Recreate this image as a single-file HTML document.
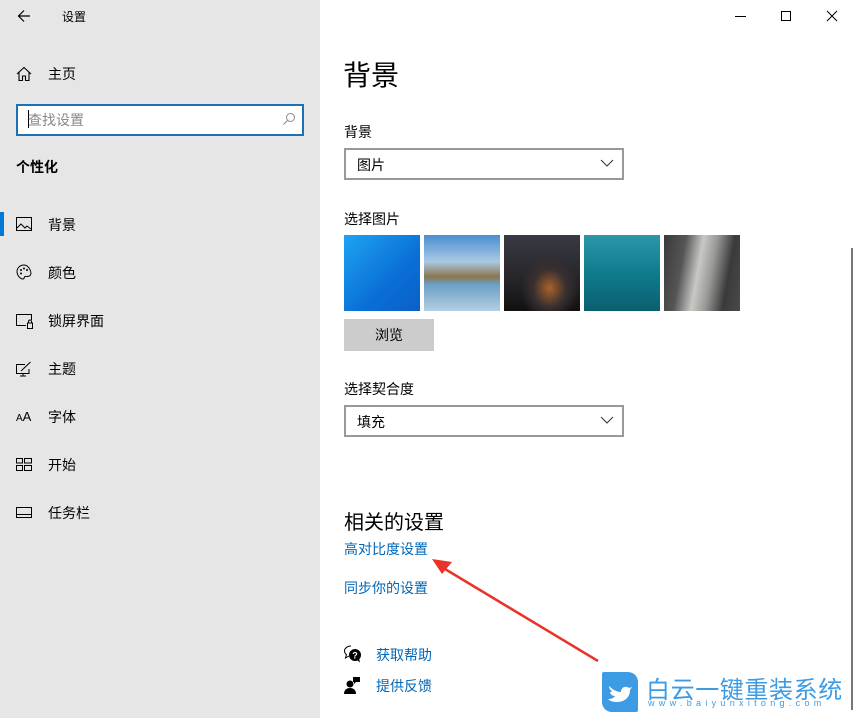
<!DOCTYPE html>
<html><head><meta charset="utf-8"><style>
*{margin:0;padding:0;box-sizing:border-box}
body{width:855px;height:718px;overflow:hidden;position:relative;background:#fff;font-family:"Liberation Sans","Noto Sans CJK SC",sans-serif;color:#000}
.a{position:absolute;white-space:nowrap}
#side{position:absolute;left:0;top:0;width:320px;height:718px;background:#e6e6e6}
.t{font-size:14px}
.ic{position:absolute;left:16px}
.dd{position:absolute;left:344px;width:280px;height:32px;border:2px solid #999;background:#fff;font-size:14px;padding:5px 11px}
.dd svg{position:absolute;right:8px;top:9px}
.img{position:absolute;top:235px;width:76px;height:76px}
.lnk{color:#0067b8;font-size:14px}
</style></head><body>
<div id="side">
<svg class="a" style="left:17px;top:9px" width="14" height="14" viewBox="0 0 14 14"><path d="M13 7H1.5M7 1.5L1.5 7L7 12.5" stroke="#000" fill="none" stroke-width="1.2"/></svg>
<div class="a" style="left:62px;top:8px;font-size:12px">设置</div>
<svg class="ic" style="top:66px" width="16" height="16" viewBox="0 0 16 16"><path d="M1 8L8 1.5L15 8M3 6.5V14.5H6.5V10H9.5V14.5H13V6.5" stroke="#000" fill="none" stroke-width="1.1"/></svg>
<div class="a t" style="left:48px;top:64px">主页</div>
<div class="a" style="left:16px;top:104px;width:288px;height:32px;border:2px solid #1e6fb7;background:#fff"></div>
<div class="a" style="left:28px;top:110px;width:1px;height:18px;background:#000"></div>
<div class="a t" style="left:28px;top:110px;color:#888">查找设置</div>
<svg class="a" style="left:282px;top:112px" width="14" height="14" viewBox="0 0 14 14"><circle cx="8.5" cy="5.5" r="4" stroke="#888" fill="none"/><path d="M5.5 8.5L1.5 12.5" stroke="#888"/></svg>
<div class="a t" style="left:16px;top:157px;font-weight:bold">个性化</div>
<div class="a" style="left:0;top:212px;width:4px;height:24px;background:#0078d7"></div>
<svg class="ic" style="top:217px" width="16" height="14" viewBox="0 0 16 14"><rect x=".5" y=".5" width="15" height="13" stroke="#000" fill="none"/><path d="M1 11L5 7L9 11L11 9L15 12" stroke="#000" fill="none"/></svg>
<div class="a t" style="left:48px;top:215px">背景</div>
<svg class="ic" style="top:264px" width="16" height="16" viewBox="0 0 16 16"><path d="M8 1C4 1 1 4 1 7.5 1 11 4 15 7 15c1.5 0 1-2 2-2.5s4 1 5.5-1.5S13 1 8 1z" stroke="#000" fill="none"/><circle cx="5" cy="6" r="1"/><circle cx="8" cy="4.5" r="1"/><circle cx="11" cy="6" r="1"/><circle cx="5" cy="9.5" r="1"/></svg>
<div class="a t" style="left:48px;top:263px">颜色</div>
<svg class="ic" style="top:314px" width="17" height="15" viewBox="0 0 17 15"><path d="M10 11.5H.5V.5H15.5V6" stroke="#000" fill="none"/><rect x="11.5" y="9" width="5" height="5.5" stroke="#000" fill="none"/><path d="M12.5 9V7.5a1.5 1.5 0 013 0V9" stroke="#000" fill="none"/></svg>
<div class="a t" style="left:48px;top:311px">锁屏界面</div>
<svg class="ic" style="top:361px" width="16" height="16" viewBox="0 0 16 16"><path d="M9 3.5H.5V12.5H13V8M4 15H10M7 12.5V15M5 10L14.5 1" stroke="#000" fill="none"/></svg>
<div class="a t" style="left:48px;top:359px">主题</div>
<div class="a" style="left:16px;top:409px;font-size:10px">A<span style="font-size:13px">A</span></div>
<div class="a t" style="left:48px;top:407px">字体</div>
<svg class="ic" style="top:458px" width="16" height="13" viewBox="0 0 16 13"><rect x=".5" y=".5" width="6" height="4.5" stroke="#000" fill="none"/><rect x="8.5" y=".5" width="7" height="4.5" stroke="#000" fill="none"/><rect x=".5" y="7.5" width="6" height="5" stroke="#000" fill="none"/><rect x="8.5" y="7.5" width="7" height="5" stroke="#000" fill="none"/></svg>
<div class="a t" style="left:48px;top:455px">开始</div>
<svg class="ic" style="top:507px" width="16" height="11" viewBox="0 0 16 11"><rect x=".5" y=".5" width="15" height="10" stroke="#000" fill="none"/><path d="M1 7.5H15" stroke="#000"/></svg>
<div class="a t" style="left:48px;top:503px">任务栏</div>
</div>
<div class="a" style="left:735px;top:16px;width:11px;height:1px;background:#000"></div>
<div class="a" style="left:781px;top:11px;width:10px;height:10px;border:1px solid #000"></div>
<svg class="a" style="left:826px;top:10px" width="12" height="12" viewBox="0 0 12 12"><path d="M1 1L11 11M11 1L1 11" stroke="#000"/></svg>
<div class="a" style="left:343px;top:54px;font-size:28px">背景</div>
<div class="a t" style="left:344px;top:122px">背景</div>
<div class="dd" style="top:148px">图片<svg width="14" height="8" viewBox="0 0 14 8"><path d="M1 1L7 7L13 1" stroke="#333" fill="none"/></svg></div>
<div class="a t" style="left:344px;top:209px">选择图片</div>
<div class="img" style="left:344px;background:linear-gradient(135deg,#1ea4f0,#0a6fd8 60%,#0b5fc8)"></div>
<div class="img" style="left:424px;background:linear-gradient(180deg,#4a8ed0 0%,#a9c9e4 35%,#8b7650 55%,#6a9fc7 65%,#b5cfe2 100%)"></div>
<div class="img" style="left:504px;background:radial-gradient(ellipse at 60% 70%,#a8622a 0%,#3a3030 25%,transparent 45%),linear-gradient(180deg,#3a3a44,#222226 65%,#111 100%)"></div>
<div class="img" style="left:584px;background:linear-gradient(180deg,#2b96a8,#0f7c8e 50%,#0a5f6e)"></div>
<div class="img" style="left:664px;background:linear-gradient(100deg,#3a3a3a 0%,#555 25%,#c8c8c4 45%,#9a9a98 60%,#3a3a3a 80%,#4a4a4a)"></div>
<div class="a t" style="left:344px;top:319px;width:90px;height:32px;background:#ccc;text-align:center;line-height:32px">浏览</div>
<div class="a t" style="left:344px;top:379px">选择契合度</div>
<div class="dd" style="top:405px">填充<svg width="14" height="8" viewBox="0 0 14 8"><path d="M1 1L7 7L13 1" stroke="#333" fill="none"/></svg></div>
<div class="a" style="left:344px;top:506px;font-size:20px">相关的设置</div>
<div class="a lnk" style="left:344px;top:539px">高对比度设置</div>
<div class="a lnk" style="left:344px;top:578px">同步你的设置</div>
<svg class="a" style="left:344px;top:645px" width="18" height="18" viewBox="0 0 18 18"><path d="M7 1C3 1 .5 3.5.5 6c0 1.5.8 2.8 2 3.7L1.5 13l3.5-2" stroke="#000" fill="none"/><circle cx="11" cy="10" r="6" fill="#000"/><path d="M13 15l3 2.5-1-4" fill="#000"/><text x="11" y="13.5" font-size="9" fill="#fff" text-anchor="middle" font-weight="bold" font-family="Liberation Sans">?</text></svg>
<div class="a lnk" style="left:376px;top:645px">获取帮助</div>
<svg class="a" style="left:344px;top:676px" width="16" height="18" viewBox="0 0 16 18"><circle cx="6" cy="8" r="3.5"/><path d="M0 18c0-4 2.5-6 6-6s6 2 6 6z"/><path d="M9 1h7v5h-4l-2 2V6H9z"/></svg>
<div class="a lnk" style="left:376px;top:676px">提供反馈</div>
<svg class="a" style="left:0;top:0" width="855" height="718"><path d="M598 661L440 566" stroke="#e8322a" stroke-width="2.5"/><path d="M432 559L452 562L442 574z" fill="#e8322a"/></svg>
<div class="a" style="left:851px;top:248px;width:2px;height:462px;background:#777"></div>
<div class="a" style="left:602px;top:672px;width:36px;height:40px;background:#3d9be4;border-radius:2px 10px 2px 10px"></div>
<svg class="a" style="left:607px;top:680px" width="26" height="24" viewBox="0 0 26 24"><path d="M2 6c4 4 8 6 12 6 0-4 4-7 8-4l3-1-2 3c0 7-5 12-13 12-4 0-7-1-9-3 3 0 6-1 7-3-3 0-5-2-5-4 1 0 2 0 2-1C3 10 2 8 2 6z" fill="#fff"/></svg>
<div class="a" style="left:646px;top:670px;font-size:24px;color:#3d9be4;letter-spacing:0.6px">白云一键重装系统</div>
<div class="a" style="left:648px;top:698px;font-size:9px;color:#3d9be4;letter-spacing:4.3px">www.baiyunxitong.com</div>
</body></html>
